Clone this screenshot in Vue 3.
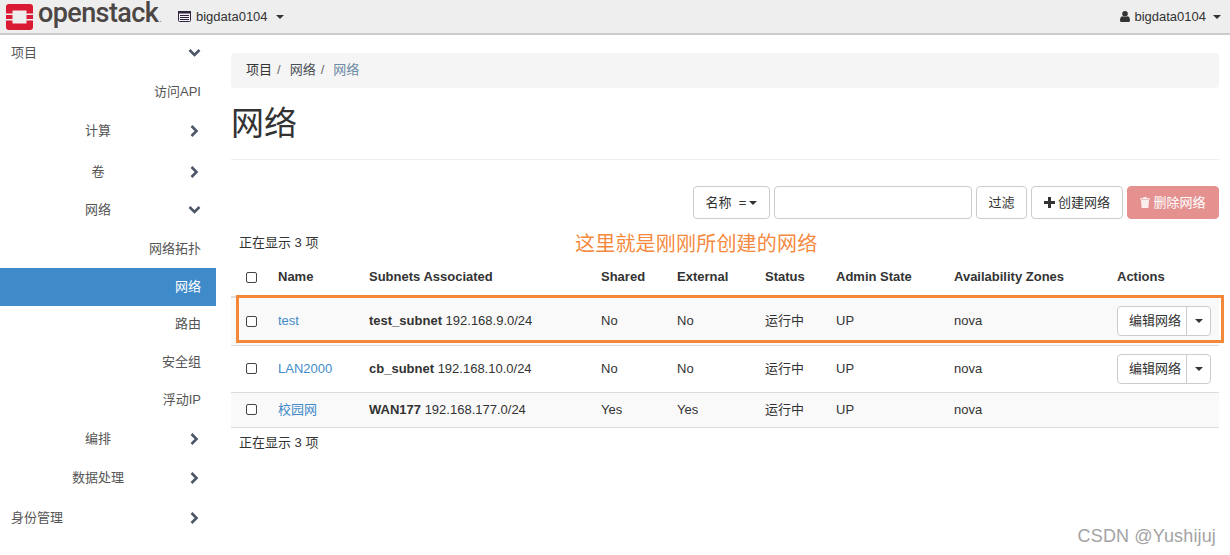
<script setup>
const nav = [
  { t: '项目', lvl: 0, icon: 'down', mt: -1 },
  { t: '访问API', lvl: 2, mt: 1 },
  { t: '计算', lvl: 1, icon: 'right', mt: 1 },
  { t: '卷', lvl: 1, icon: 'right', mt: 3 },
  { t: '网络', lvl: 1, icon: 'down', mt: 0 },
  { t: '网络拓扑', lvl: 2, mt: 1 },
  { t: '网络', lvl: 2, active: true, mt: 0 },
  { t: '路由', lvl: 2, mt: -1 },
  { t: '安全组', lvl: 2, mt: 0 },
  { t: '浮动IP', lvl: 2, mt: 0 },
  { t: '编排', lvl: 1, icon: 'right', mt: 1 },
  { t: '数据处理', lvl: 1, icon: 'right', mt: 1 },
  { t: '身份管理', lvl: 0, icon: 'right', mt: 2 }
]
const heads = ['Name', 'Subnets Associated', 'Shared', 'External', 'Status', 'Admin State', 'Availability Zones', 'Actions']
const rows = [
  { name: 'test', sub: 'test_subnet', ip: '192.168.9.0/24', shared: 'No', ext: 'No', action: true, cls: 'r1 odd' },
  { name: 'LAN2000', sub: 'cb_subnet', ip: '192.168.10.0/24', shared: 'No', ext: 'No', action: true, cls: 'r2' },
  { name: '校园网', sub: 'WAN177', ip: '192.168.177.0/24', shared: 'Yes', ext: 'Yes', action: false, cls: 'odd' }
]
</script>

<template>
  <div class="page">
    <header class="topbar">
      <div class="brand">
        <svg class="logo" width="27" height="26" viewBox="0 0 27 26">
          <path fill="#da1a32" d="M3 0H24A3 3 0 0 1 27 3V9.5H20.5V6.5H6.5V9.5H0V3A3 3 0 0 1 3 0ZM0 16.5H6.5V19.5H20.5V16.5H27V23A3 3 0 0 1 24 26H3A3 3 0 0 1 0 23Z" />
          <rect x="0" y="11" width="6.5" height="4" fill="#da1a32" />
          <rect x="20.5" y="11" width="6.5" height="4" fill="#da1a32" />
        </svg>
        <span class="wordmark">openstack<i>.</i></span>
      </div>
      <div class="project">
        <svg width="13" height="11" viewBox="0 0 13 11">
          <rect x="0.5" y="0.5" width="12" height="10" rx="1" fill="#f4f0f6" stroke="#2e2440" />
          <rect x="0" y="0" width="13" height="2.5" fill="#2e2440" />
          <path d="M2 4.5H11M2 6.5H11M2 8.5H11" stroke="#2e2440" stroke-width="1" />
        </svg>
        <span>bigdata0104</span><b class="caret"></b>
      </div>
      <div class="user">
        <svg width="10" height="11" viewBox="0 0 10 11">
          <circle cx="5" cy="2.8" r="2.8" fill="#333" />
          <path fill="#333" d="M0 9.5C0 6.8 1 5.2 2.6 5.2C3.4 5.9 6.6 5.9 7.4 5.2C9 5.2 10 6.8 10 9.5C10 10.4 9.4 11 8.6 11H1.4C.6 11 0 10.4 0 9.5Z" />
        </svg>
        <span>bigdata0104</span><b class="caret"></b>
      </div>
    </header>

    <div class="body">
      <aside class="sidebar">
        <div
          v-for="(n, i) in nav"
          :key="i"
          class="nav-item"
          :class="['lvl' + n.lvl, { active: n.active }]"
          :style="{ marginTop: n.mt + 'px' }"
        >
          <span class="nav-label">{{ n.t }}</span>
          <svg v-if="n.icon === 'down'" class="chev down" width="13" height="9" viewBox="0 0 13 9">
            <path d="M1.5 1.5L6.5 6.5L11.5 1.5" fill="none" stroke="#4d5668" stroke-width="2.6" />
          </svg>
          <svg v-if="n.icon === 'right'" class="chev right" width="9" height="13" viewBox="0 0 9 13">
            <path d="M1.5 1.5L6.5 6.5L1.5 11.5" fill="none" stroke="#4d5668" stroke-width="2.6" />
          </svg>
        </div>
      </aside>

      <main class="content">
        <nav class="crumbs">
          <span>项目</span><em>/</em><span class="mid">网络</span><em>/</em><span class="cur">网络</span>
        </nav>
        <h1 class="title">网络</h1>

        <div class="toolbar">
          <button class="btn select">名称&nbsp;&nbsp;=<b class="caret dark"></b></button>
          <input class="search" />
          <button class="btn filter">过滤</button>
          <button class="btn create">
            <svg width="11" height="11" viewBox="0 0 11 11"><path d="M4 0H7V4H11V7H7V11H4V7H0V4H4Z" fill="#333" /></svg>
            创建网络
          </button>
          <button class="btn danger">
            <svg width="10" height="11" viewBox="0 0 10 11"><path d="M3.5 0H6.5L7 1.2H10V2.4H0V1.2H3ZM1 3H9L8.4 11H1.6Z" fill="#fff" opacity=".85" /></svg>
            删除网络
          </button>
        </div>

        <div class="count">正在显示 3 项</div>

        <table class="grid">
          <colgroup>
            <col class="c0" /><col class="c1" /><col class="c2" /><col class="c3" /><col class="c4" /><col class="c5" /><col class="c6" /><col class="c7" /><col />
          </colgroup>
          <thead>
            <tr>
              <th class="chk"><span class="box"></span></th>
              <th v-for="h in heads" :key="h">{{ h }}</th>
            </tr>
          </thead>
          <tbody>
            <tr v-for="r in rows" :key="r.name" :class="r.cls">
              <td class="chk"><span class="box"></span></td>
              <td><a class="link">{{ r.name }}</a></td>
              <td><strong>{{ r.sub }}</strong> {{ r.ip }}</td>
              <td>{{ r.shared }}</td>
              <td>{{ r.ext }}</td>
              <td>运行中</td>
              <td>UP</td>
              <td>nova</td>
              <td>
                <div v-if="r.action" class="split">
                  <span class="split-main">编辑网络</span>
                  <span class="split-caret"><b class="caret dark"></b></span>
                </div>
              </td>
            </tr>
          </tbody>
        </table>
        <div class="count after">正在显示 3 项</div>
      </main>
    </div>

    <div class="note">这里就是刚刚所创建的网络</div>
    <div class="highlight"></div>
    <div class="mark">CSDN @Yushijuj</div>
  </div>
</template>

<style>
html, body { margin: 0; background: #fff; overflow: hidden; }
</style>

<style scoped>
.page {
  position: relative;
  width: 1230px;
  height: 555px;
  overflow: hidden;
  background: #fff;
  color: #333;
  font: 13px/18px "Liberation Sans", "Noto Sans CJK SC", sans-serif;
}
.topbar {
  display: flex;
  align-items: center;
  height: 33px;
  background: #eee;
  border-bottom: 2px solid #ccc;
  box-sizing: content-box;
}
.brand { display: flex; align-items: center; width: 178px; padding-left: 6px; box-sizing: border-box; }
.logo { flex: none; }
.wordmark { margin-left: 5px; font: 500 27px/33px Roboto, sans-serif; color: #4c4645; letter-spacing: -.6px; }
.wordmark i { font-style: normal; font-size: 9px; color: #888; margin-left: 1px; }
.project, .user { display: flex; align-items: center; gap: 5px; }
.user { margin-left: auto; padding-right: 9px; gap: 4px; }
.caret {
  display: inline-block;
  width: 0;
  height: 0;
  margin-left: 3px;
  border-top: 4px solid #333;
  border-left: 4px solid transparent;
  border-right: 4px solid transparent;
}
.body { display: flex; }
.sidebar { width: 216px; flex: none; }
.nav-item {
  position: relative;
  display: flex;
  align-items: center;
  height: 38px;
  color: #555;
  box-sizing: border-box;
}
.nav-label { flex: none; }
.lvl0 { padding-left: 11px; }
.lvl1 { justify-content: center; width: 196px; }
.lvl2 { justify-content: flex-end; padding-right: 15px; }
.active { background: #3f8ac9; color: #fff; }
.chev { position: absolute; top: 50%; transform: translateY(-50%); }
.chev.down { left: 188px; }
.chev.right { left: 190px; }
.content { flex: 1; padding: 18px 11px 0 15px; min-width: 0; }
.crumbs {
  display: flex;
  align-items: center;
  height: 35px;
  padding: 0 0 2px 15px;
  box-sizing: border-box;
  background: #f5f5f5;
  border-radius: 4px;
}
.crumbs em { font-style: normal; color: #666; margin: 0 9px 0 5px; }
.mid { color: #4a4f57; }
.cur { color: #6d8aa3; }
.title { margin: 17px 0 0; font-size: 33px; font-weight: 400; line-height: 38px; padding-bottom: 16px; border-bottom: 1px solid #eee; color: #333; }
.toolbar { display: flex; justify-content: flex-end; gap: 4px; margin-top: 26px; }
.btn {
  height: 33px;
  box-sizing: border-box;
  border: 1px solid #ccc;
  border-radius: 4px;
  background: #fff;
  color: #333;
  font: inherit;
  padding: 0;
  display: flex;
  align-items: center;
  justify-content: center;
}
.select { width: 77px; }
.search { width: 198px; height: 33px; box-sizing: border-box; border: 1px solid #ccc; border-radius: 4px; padding: 0; }
.filter { width: 51px; }
.create { width: 92px; gap: 3px; }
.danger { width: 92px; gap: 3px; border-color: #e59190; background: #e59190; color: #fff; }
.count { padding-left: 8px; margin-top: 14px; height: 20px; line-height: 20px; }
.after { margin-top: 5px; }
.grid { width: 988px; table-layout: fixed; border-collapse: collapse; }
.c0 { width: 39px; } .c1 { width: 91px; } .c2 { width: 232px; } .c3 { width: 76px; }
.c4 { width: 88px; } .c5 { width: 71px; } .c6 { width: 118px; } .c7 { width: 163px; }
th { height: 44px; padding: 5px 8px 0; text-align: left; font-weight: 700; color: #333; border-bottom: 2px solid #ddd; box-sizing: border-box; }
td { height: 35px; padding: 0 8px; border-bottom: 1px solid #ddd; box-sizing: border-box; }
tr.r1 td { height: 48px; }
tr.r2 td { height: 47px; }
tr.odd td { background: #f9f9f9; }
th.chk, td.chk { padding-left: 15px; padding-right: 0; }
.box { display: block; width: 9px; height: 9px; border: 1px solid #444; border-radius: 2px; background: #fff; }
.link { color: #428bca; }
.split { display: flex; width: 94px; height: 30px; border: 1px solid #ccc; border-radius: 4px; background: #fff; box-sizing: border-box; }
.split-main { width: 69px; padding-left: 11px; box-sizing: border-box; line-height: 28px; border-right: 1px solid #ccc; white-space: nowrap; }
.split-caret { flex: 1; display: flex; align-items: center; justify-content: center; }
.split-caret .caret { margin: 0; }
.note { position: absolute; left: 575px; top: 232px; font-size: 20px; line-height: 24px; letter-spacing: .2px; color: #f5893d; white-space: nowrap; }
.highlight { position: absolute; left: 236px; top: 295px; width: 988px; height: 48px; border: 3px solid #f5873b; box-sizing: border-box; }
.mark { position: absolute; right: 14px; top: 525px; font-size: 18px; line-height: 22px; letter-spacing: .15px; color: #a3a3a3; }
</style>
